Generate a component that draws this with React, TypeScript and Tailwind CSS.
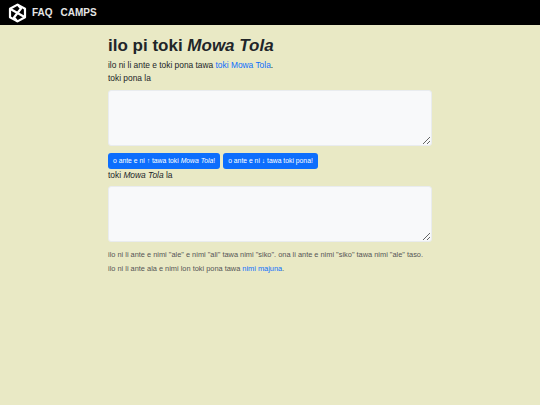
const Logo = () => (
  <svg width="19" height="20" viewBox="0 0 19 20" fill="none" stroke="#fff" strokeWidth="2.2" strokeLinejoin="round">
    <path d="M9.5 1.6 17 5.8 17 14.2 9.5 18.4 2 14.2 2 5.8Z" />
    <path d="M2 5.8 9.5 10 6 14.5 9.5 18.4" />
    <path d="M17 14.2 9.5 10 13 5.5 9.5 1.6" />
  </svg>
);

const Field = () => (
  <textarea className="block h-[56px] w-full rounded-[3px] border border-[#e9ecef] bg-[#f8f9fa]" />
);

const Button = ({ children }: { children: React.ReactNode }) => (
  <button className="h-[16px] rounded-[3px] bg-[#0d6efd] px-[5px] text-[6.8px] leading-[16px] text-white">
    {children}
  </button>
);

export default function App() {
  return (
    <div className="min-h-[405px] bg-[#e9e9c5] font-['Liberation_Sans',Arial,sans-serif] text-[#212529]">
      <nav className="flex h-[25px] items-center gap-[8px] bg-black pl-[8px] text-[10px] font-bold text-[#e5e5e5]">
        <div className="flex items-center gap-[5px]">
          <Logo />
          <span>FAQ</span>
        </div>
        <span>CAMPS</span>
      </nav>
      <main className="mx-auto w-[324px] pt-[10px]">
        <h1 className="text-[17px] leading-[22px] font-bold">
          ilo pi toki <em>Mowa Tola</em>
        </h1>
        <p className="mt-[2px] text-[8.4px] leading-[13px]">
          ilo ni li ante e toki pona tawa <a className="text-[#0d6efd]">toki Mowa Tola</a>.
        </p>
        <p className="text-[8.4px] leading-[13px]">toki pona la</p>
        <div className="mt-[5px]">
          <Field />
        </div>
        <div className="mt-[7px] flex gap-[3px]">
          <Button>
            o ante e ni ↑ tawa toki <em>Mowa Tola</em>!
          </Button>
          <Button>o ante e ni ↓ tawa toki pona!</Button>
        </div>
        <p className="text-[8.4px] leading-[13px]">
          toki <em>Mowa Tola</em> la
        </p>
        <div className="mt-[4px]">
          <Field />
        </div>
        <p className="mt-[7px] text-[7.4px] leading-[11px] text-[#555]">
          ilo ni li ante e nimi "ale" e nimi "ali" tawa nimi "siko". ona li ante e nimi "siko" tawa nimi "ale" taso.
        </p>
        <p className="mt-[3px] text-[7.4px] leading-[11px] text-[#555]">
          ilo ni li ante ala e nimi lon toki pona tawa <a className="text-[#0d6efd]">nimi majuna</a>.
        </p>
      </main>
    </div>
  );
}
